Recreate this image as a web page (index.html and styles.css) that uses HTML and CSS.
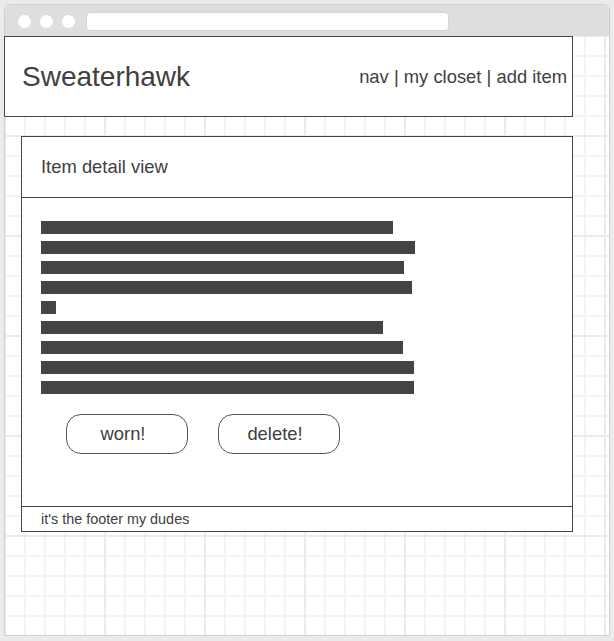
FILE: index.html
```html
<!DOCTYPE html>
<html>
<head>
<meta charset="utf-8">
<title>Sweaterhawk</title>
<link rel="stylesheet" href="styles.css">
</head>
<body>
<div class="window">
  <div class="titlebar">
    <span class="dot"></span><span class="dot"></span><span class="dot"></span>
    <span class="addr"></span>
  </div>
  <div class="content">
    <header class="site-header">
      <div class="logo">Sweaterhawk</div>
      <nav class="nav">nav | my closet | add item</nav>
    </header>
    <section class="card">
      <div class="card-head">Item detail view</div>
      <div class="card-body">
        <div class="bars">
          <div class="bar" style="width:352px"></div>
          <div class="bar" style="width:374px"></div>
          <div class="bar" style="width:363px"></div>
          <div class="bar" style="width:371px"></div>
          <div class="bar" style="width:15px"></div>
          <div class="bar" style="width:342px"></div>
          <div class="bar" style="width:362px"></div>
          <div class="bar" style="width:373px"></div>
          <div class="bar" style="width:373px"></div>
        </div>
        <div class="actions">
          <button class="btn">worn!</button>
          <button class="btn">delete!</button>
        </div>
      </div>
      <footer class="card-foot">it's the footer my dudes</footer>
    </section>
  </div>
</div>
</body>
</html>
```
FILE: styles.css
```css
html, body {
  margin: 0;
  padding: 0;
}
body {
  background: #ebebeb;
  font-family: "Liberation Sans", Arial, sans-serif;
  color: #404040;
}
.window {
  margin: 4px 0 0 4px;
  width: 606px;
  height: 632px;
  box-sizing: border-box;
  border: 1px solid #d0d0d0;
  border-radius: 6px 6px 0 0;
  display: flex;
  flex-direction: column;
  background: #fff;
}
.titlebar {
  height: 31px;
  flex-shrink: 0;
  background: #dedede;
  border-radius: 5px 5px 0 0;
  display: flex;
  align-items: flex-start;
  padding-left: 13px;
}
.dot {
  width: 13px;
  height: 13px;
  border-radius: 50%;
  background: #fff;
  margin-top: 10px;
  margin-right: 9px;
}
.addr {
  margin-top: 7px;
  margin-left: 2px;
  width: 363px;
  height: 19px;
  box-sizing: border-box;
  border: 1px solid #d4d4d4;
  border-radius: 4px;
  background: #fff;
}
.content {
  flex: 1;
  background-color: #fff;
  background-image:
    linear-gradient(to right, #ebebeb 2px, transparent 2px),
    linear-gradient(to bottom, #ebebeb 2px, transparent 2px),
    linear-gradient(to right, #f4f4f4 2px, transparent 2px),
    linear-gradient(to bottom, #f4f4f4 2px, transparent 2px);
  background-size: 100px 100px, 100px 100px, 20px 20px, 20px 20px;
  background-position: 99px 0, 0 99px, 19px 0, 0 19px;
}
.site-header {
  margin-left: -1px;
  width: 569px;
  height: 81px;
  box-sizing: border-box;
  border: 1px solid #444;
  background: #fff;
  display: flex;
  justify-content: space-between;
  align-items: center;
  padding: 0 5px 0 17px;
}
.logo {
  font-size: 28px;
}
.nav {
  font-size: 18.4px;
}
.card {
  margin: 19px 0 0 16px;
  width: 552px;
  height: 396px;
  box-sizing: border-box;
  border: 1px solid #444;
  background: #fff;
  display: flex;
  flex-direction: column;
}
.card-head {
  height: 60px;
  flex-shrink: 0;
  border-bottom: 1px solid #444;
  display: flex;
  align-items: center;
  padding-left: 19px;
  font-size: 18.4px;
}
.card-body {
  flex: 1;
  padding: 23px 0 0 19px;
}
.bars {
  display: flex;
  flex-direction: column;
  gap: 7px;
}
.bar {
  height: 13px;
  background: #444;
}
.actions {
  margin-top: 20px;
  padding-left: 25px;
  display: flex;
  gap: 30px;
}
.btn {
  width: 122px;
  height: 40px;
  box-sizing: border-box;
  border: 1px solid #555;
  border-radius: 15px;
  background: #fff;
  font-family: "Liberation Sans", Arial, sans-serif;
  font-size: 18.4px;
  color: #404040;
  padding: 0 8px 0 0;
}
.card-foot {
  height: 24px;
  flex-shrink: 0;
  border-top: 1px solid #444;
  display: flex;
  align-items: center;
  padding-left: 19px;
  font-size: 14.4px;
}
```
